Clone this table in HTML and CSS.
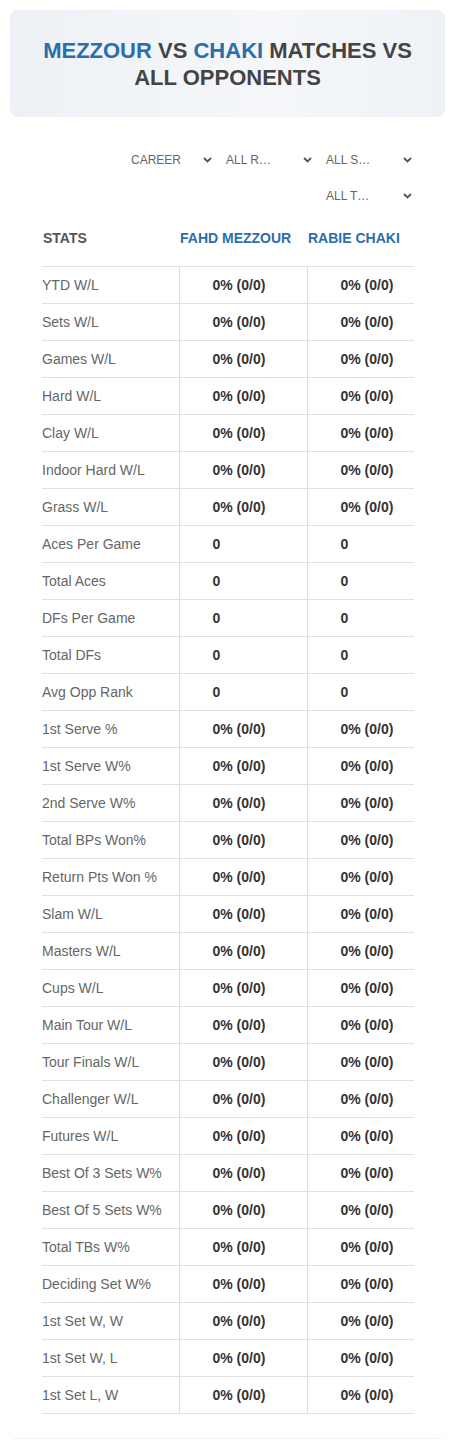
FILE: index.html
```html
<!DOCTYPE html>
<html lang="en">

<head>
    <meta charset="UTF-8">
    <meta name="viewport" content="width=device-width, initial-scale=1.0">
    <title>Mezzour vs Chaki</title>
    <link rel="stylesheet" href="styles.css">
</head>

<body>
    <div class="page">
        <div class="title-card">
            <h1><span class="player">Mezzour</span> vs <span class="player">Chaki</span> Matches vs All Opponents</h1>
        </div>

        <div class="stats-card">
            <!-- Filtres -->
            <div class="filters">
                <div class="filter filter-small">
                    <span>CAREER</span>
                    <svg width="9" height="6" viewBox="0 0 9 6"><path d="M1 1l3.5 3.5L8 1" fill="none" stroke="#555" stroke-width="1.8"/></svg>
                </div>
                <div class="filter">
                    <span>ALL R…</span>
                    <svg width="9" height="6" viewBox="0 0 9 6"><path d="M1 1l3.5 3.5L8 1" fill="none" stroke="#555" stroke-width="1.8"/></svg>
                </div>
                <div class="filter">
                    <span>ALL S…</span>
                    <svg width="9" height="6" viewBox="0 0 9 6"><path d="M1 1l3.5 3.5L8 1" fill="none" stroke="#555" stroke-width="1.8"/></svg>
                </div>
                <div class="filter">
                    <span>ALL T…</span>
                    <svg width="9" height="6" viewBox="0 0 9 6"><path d="M1 1l3.5 3.5L8 1" fill="none" stroke="#555" stroke-width="1.8"/></svg>
                </div>
            </div>

            <table class="stats-table">
                <thead>
                    <tr>
                        <th class="col-stat">Stats</th>
                        <th class="col-p1 player-name">Fahd Mezzour</th>
                        <th class="col-p2 player-name">Rabie Chaki</th>
                    </tr>
                </thead>
                <tbody>
                    <tr><td>YTD W/L</td><td>0% (0/0)</td><td>0% (0/0)</td></tr>
                    <tr><td>Sets W/L</td><td>0% (0/0)</td><td>0% (0/0)</td></tr>
                    <tr><td>Games W/L</td><td>0% (0/0)</td><td>0% (0/0)</td></tr>
                    <tr><td>Hard W/L</td><td>0% (0/0)</td><td>0% (0/0)</td></tr>
                    <tr><td>Clay W/L</td><td>0% (0/0)</td><td>0% (0/0)</td></tr>
                    <tr><td>Indoor Hard W/L</td><td>0% (0/0)</td><td>0% (0/0)</td></tr>
                    <tr><td>Grass W/L</td><td>0% (0/0)</td><td>0% (0/0)</td></tr>
                    <tr><td>Aces Per Game</td><td>0</td><td>0</td></tr>
                    <tr><td>Total Aces</td><td>0</td><td>0</td></tr>
                    <tr><td>DFs Per Game</td><td>0</td><td>0</td></tr>
                    <tr><td>Total DFs</td><td>0</td><td>0</td></tr>
                    <tr><td>Avg Opp Rank</td><td>0</td><td>0</td></tr>
                    <tr><td>1st Serve %</td><td>0% (0/0)</td><td>0% (0/0)</td></tr>
                    <tr><td>1st Serve W%</td><td>0% (0/0)</td><td>0% (0/0)</td></tr>
                    <tr><td>2nd Serve W%</td><td>0% (0/0)</td><td>0% (0/0)</td></tr>
                    <tr><td>Total BPs Won%</td><td>0% (0/0)</td><td>0% (0/0)</td></tr>
                    <tr><td>Return Pts Won %</td><td>0% (0/0)</td><td>0% (0/0)</td></tr>
                    <tr><td>Slam W/L</td><td>0% (0/0)</td><td>0% (0/0)</td></tr>
                    <tr><td>Masters W/L</td><td>0% (0/0)</td><td>0% (0/0)</td></tr>
                    <tr><td>Cups W/L</td><td>0% (0/0)</td><td>0% (0/0)</td></tr>
                    <tr><td>Main Tour W/L</td><td>0% (0/0)</td><td>0% (0/0)</td></tr>
                    <tr><td>Tour Finals W/L</td><td>0% (0/0)</td><td>0% (0/0)</td></tr>
                    <tr><td>Challenger W/L</td><td>0% (0/0)</td><td>0% (0/0)</td></tr>
                    <tr><td>Futures W/L</td><td>0% (0/0)</td><td>0% (0/0)</td></tr>
                    <tr><td>Best Of 3 Sets W%</td><td>0% (0/0)</td><td>0% (0/0)</td></tr>
                    <tr><td>Best Of 5 Sets W%</td><td>0% (0/0)</td><td>0% (0/0)</td></tr>
                    <tr><td>Total TBs W%</td><td>0% (0/0)</td><td>0% (0/0)</td></tr>
                    <tr><td>Deciding Set W%</td><td>0% (0/0)</td><td>0% (0/0)</td></tr>
                    <tr><td>1st Set W, W</td><td>0% (0/0)</td><td>0% (0/0)</td></tr>
                    <tr><td>1st Set W, L</td><td>0% (0/0)</td><td>0% (0/0)</td></tr>
                    <tr><td>1st Set L, W</td><td>0% (0/0)</td><td>0% (0/0)</td></tr>
                </tbody>
            </table>
        </div>
    </div>
</body>

</html>
```

FILE: styles.css
```css
* {
    margin: 0;
    padding: 0;
    box-sizing: border-box;
    font-family: "Liberation Sans", Arial, sans-serif;
}

body {
    background-color: #fff;
}

.page {
    padding: 10px;
}

.title-card {
    height: 107px;
    display: flex;
    align-items: center;
    justify-content: center;
    padding: 0 20px;
    border-radius: 8px;
    background: linear-gradient(90deg, #edf1f5, #f5f7fa 60%, #eef2f6);
}

.title-card h1 {
    font-size: 22px;
    line-height: 27px;
    font-weight: bold;
    text-transform: uppercase;
    text-align: center;
    color: #444;
}

.player {
    color: #2a6eab;
}

.stats-card {
    margin-top: 10px;
    padding: 21px 31px 24px 32px;
    border-radius: 8px;
    background-color: #fff;
    box-shadow: 0 1px 1px rgba(0, 0, 0, 0.06);
}

.filters {
    display: flex;
    flex-wrap: wrap;
    justify-content: flex-end;
    gap: 12px;
}

.filter {
    width: 88px;
    height: 24px;
    display: flex;
    align-items: center;
    justify-content: space-between;
    padding-right: 2px;
    font-family: Roboto, "Noto Sans", sans-serif;
    font-size: 12px;
    color: #666;
}

.filter-small {
    width: 83px;
}

.stats-table {
    width: 100%;
    margin-top: 12px;
    border-collapse: collapse;
}

.stats-table th {
    height: 46px;
    padding: 10px 0 20px 1px;
    line-height: 16px;
    font-size: 14px;
    font-weight: bold;
    text-align: left;
    text-transform: uppercase;
    color: #555;
    border-bottom: 1px solid #e2e2e2;
}

.stats-table th.player-name {
    color: #2a6eab;
}

.col-stat {
    width: 137px;
}

.col-p1 {
    width: 128px;
}

.stats-table td {
    height: 37px;
    padding: 0 0 0 33px;
    font-size: 14px;
    font-weight: bold;
    color: #333;
    border-bottom: 1px solid #e2e2e2;
    border-left: 1px solid #dcdcdc;
}

.stats-table td:first-child {
    padding-left: 0;
    font-weight: normal;
    color: #666;
    border-left: none;
}
```
